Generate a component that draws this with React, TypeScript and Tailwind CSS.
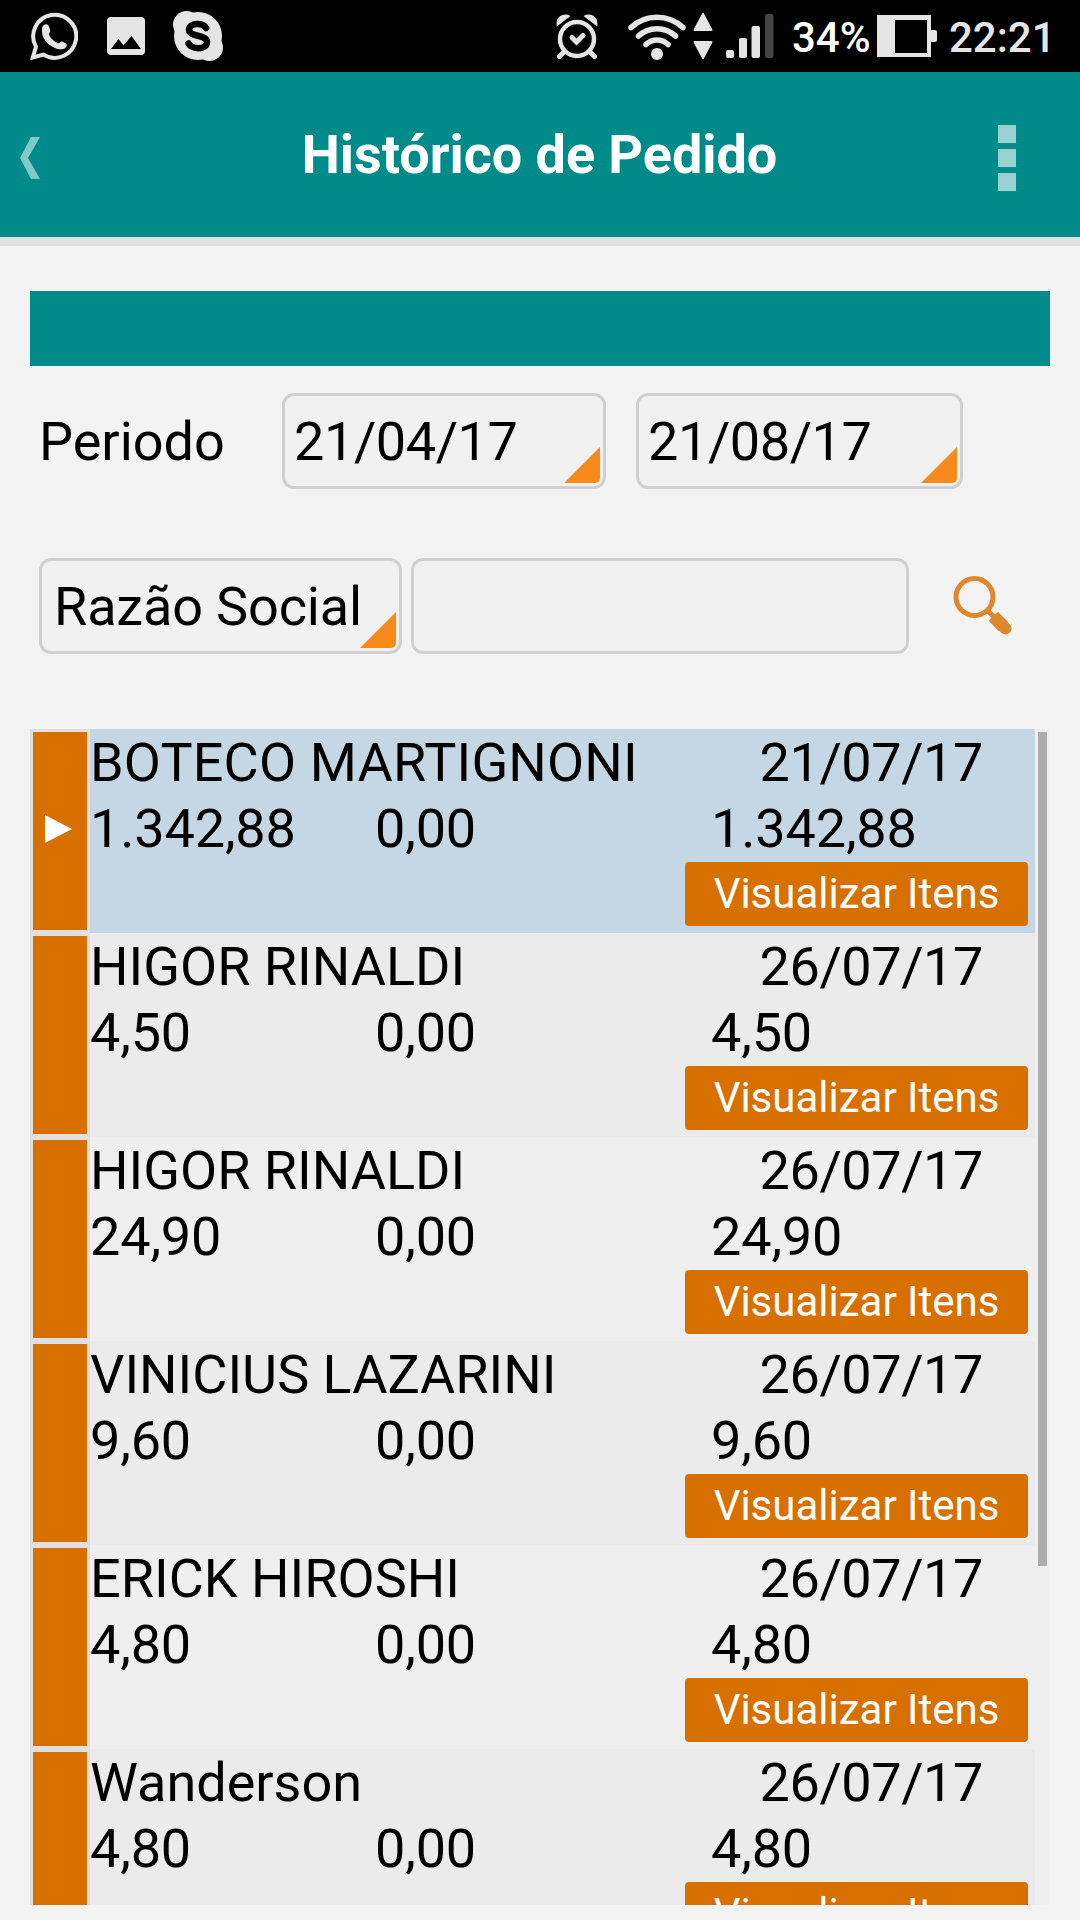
import React from 'react';

interface Order {
  client: string;
  date: string;
  total: string;
  discount: string;
  net: string;
}

const orders: Order[] = [
  { client: 'BOTECO MARTIGNONI', date: '21/07/17', total: '1.342,88', discount: '0,00', net: '1.342,88' },
  { client: 'HIGOR RINALDI', date: '26/07/17', total: '4,50', discount: '0,00', net: '4,50' },
  { client: 'HIGOR RINALDI', date: '26/07/17', total: '24,90', discount: '0,00', net: '24,90' },
  { client: 'VINICIUS LAZARINI', date: '26/07/17', total: '9,60', discount: '0,00', net: '9,60' },
  { client: 'ERICK HIROSHI', date: '26/07/17', total: '4,80', discount: '0,00', net: '4,80' },
  { client: 'Wanderson', date: '26/07/17', total: '4,80', discount: '0,00', net: '4,80' },
];

const StatusBar = () => (
  <div className="flex h-[72px] items-center bg-black pl-[30px] text-[#e5e5e5]">
    {/* WhatsApp */}
    <svg className="h-12 w-12" viewBox="0 0 48 48" fill="none">
      <path d="M2.8 45.500L6 34.800A21.500 21.500 0 1 1 13.500 42.600z" stroke="#e5e5e5" strokeWidth="4" />
      <path
        d="M13 14c2-2.500 5-2 6 .5l1.300 4c.4 1.500-1.800 3-1.300 4.300 1.600 3.600 5 7 9 8.500 1.300.4 2.600-2.300 4-1.800l3.700 1.800c1.800 1 1.300 3.300-.5 4.800-2.500 2-6 1.900-10.200 0C16.500 32 11.500 26 12 17.500c0-1.500.3-2.800 1-3.500z"
        fill="#e5e5e5"
      />
    </svg>
    <svg className="ml-[29px] h-[38px] w-[38px]" viewBox="0 0 38 38">
      <rect width="38" height="38" rx="4" fill="#e5e5e5" />
      <path d="M4 32l7.500-10 5 6.500L24.500 19 34 32z" fill="#000" />
    </svg>
    {/* Skype */}
    <svg className="ml-7 h-[50px] w-[50px]" viewBox="0 0 50 50" fill="#e5e5e5">
      <circle cx="25" cy="25" r="24" />
      <circle cx="13.500" cy="13.500" r="13.500" />
      <circle cx="36.500" cy="36.500" r="13.500" />
      <path
        d="M33 17C30.500 12 16.500 11 16 18.500c-.5 8 18 4.500 18 12.500 0 8.500-15.500 7.500-18.500 1.500"
        fill="none"
        stroke="#000"
        strokeWidth="6.500"
        strokeLinecap="round"
      />
    </svg>
    {/* Alarm */}
    <svg className="ml-[333px] h-[46px] w-[44px]" viewBox="0 0 44 46" fill="none" stroke="#e5e5e5">
      <circle cx="21" cy="26" r="17" strokeWidth="4.500" />
      <path d="M7.500 39.500l-4 4M34.500 39.500l4 4" strokeWidth="5" strokeLinecap="round" />
      <path d="M16 24.500l4.500 4.500 6.500-6.500" strokeWidth="5" strokeLinecap="round" />
      <path d="M.8 13.500C-1 4 7 -1 14.500 3zM41.200 13.500C43 4 35 -1 27.500 3z" fill="#e5e5e5" stroke="none" />
    </svg>
    {/* Wi-Fi */}
    <svg className="ml-7 h-12 w-[58px]" viewBox="0 0 58 48" fill="none" stroke="#e5e5e5" strokeWidth="5.500" strokeLinecap="round">
      <path d="M3 15.500a38 38 0 0 1 52 0M10.500 24a27 27 0 0 1 37 0M18 32.500a16 16 0 0 1 22 0" />
      <circle cx="29" cy="42" r="6" fill="#e5e5e5" stroke="none" />
    </svg>
    <svg className="ml-[7px] h-12 w-5" viewBox="0 0 20 48" fill="#e5e5e5" stroke="#e5e5e5" strokeWidth="2" strokeLinejoin="round">
      <path d="M10 2l8.500 16h-17zM10 46l8.500-16h-17z" />
    </svg>
    {/* Signal */}
    <svg className="ml-[13px] h-11 w-12" viewBox="0 0 48 44" fill="#e5e5e5">
      <rect y="36" width="8" height="8" rx="2" />
      <rect x="13" y="24" width="8" height="20" rx="2" />
      <rect x="25.500" y="12" width="8.500" height="32" rx="2" />
      <rect x="39" width="8.500" height="44" rx="2" fill="#444" />
    </svg>
    <span className="ml-[18px] w-[85px] pt-[3px] text-[42px] leading-[50px] font-medium text-white">34%</span>
    <svg className="h-[42px] w-[60px]" viewBox="0 0 60 42">
      <rect width="54" height="42" fill="#e5e5e5" />
      <rect x="18" y="5" width="32" height="33" fill="#000" />
      <rect x="53" y="15" width="7" height="12" rx="2" fill="#e5e5e5" />
    </svg>
    <span className="ml-3 pt-[3px] text-[42px] leading-[50px] font-medium">22:21</span>
  </div>
);

const Header = () => (
  <header className="flex h-[174px] items-center justify-between border-b-[9px] border-[#e0e0e0] bg-[#008b8b] pt-[7px] pr-16 pl-5">
    <svg className="h-[42px] w-5" viewBox="0 0 20 42" fill="#80c9c8">
      <path d="M11 0h9L8 21l12 21h-9L0 21z" />
    </svg>
    <h1 className="pb-[7px] pl-[41px] text-[54px] leading-[64px] font-bold tracking-[-0.05px] text-white">Histórico de Pedido</h1>
    <div className="flex flex-col gap-1.5">
      <span className="h-[18px] w-[18px] bg-[#99d3d1]" />
      <span className="h-[18px] w-[18px] bg-[#99d3d1]" />
      <span className="h-[18px] w-[18px] bg-[#99d3d1]" />
    </div>
  </header>
);

const Picker = ({ value, className }: { value: string; className: string }) => (
  <button className={`relative h-24 rounded-xl border-3 border-[#d0d0d0] bg-[#f1f1f1] text-left leading-[92px] whitespace-nowrap ${className}`}>
    {value}
    <svg className="absolute right-[3px] bottom-[3px] h-9 w-9" viewBox="0 0 36 36" fill="#f78a1a">
      <path d="M0 36L36 0v31a5 5 0 0 1-5 5z" />
    </svg>
  </button>
);

const OrderRow = ({ order, selected, odd }: { order: Order; selected: boolean; odd: boolean }) => (
  <div className="flex h-[204px] shrink-0">
    <div className="w-[60px] border-3 border-[#e0e0e0] bg-[#d87000]">
      {selected && (
        <svg className="mt-[83px] ml-3 h-7 w-[27px]" viewBox="0 0 27 28" fill="#fff">
          <path d="M0 0l27 14L0 28z" />
        </svg>
      )}
    </div>
    <div className={`w-[945px] pt-px leading-[66px] ${selected ? 'bg-[#c5d7e4]' : odd ? 'bg-[#ebebeb]' : 'bg-[#efefef]'}`}>
      <div className="flex h-[66px] justify-between pr-[52px]">
        <span className={selected ? 'tracking-[0.15px]' : ''}>{order.client}</span>
        <span className="tracking-[-0.4px]">{order.date}</span>
      </div>
      <div className="flex h-[66px] tracking-[-0.15px]">
        <span className="w-[285px]">{order.total}</span>
        <span className="w-[336px]">{order.discount}</span>
        <span>{order.net}</span>
      </div>
      <button className="ml-[595px] block h-16 w-[343px] rounded bg-[#d87000] text-[42px] leading-[64px] text-white">
        Visualizar Itens
      </button>
    </div>
  </div>
);

export default function App() {
  return (
    <div className="h-[1920px] w-[1080px] overflow-hidden bg-[#f3f3f3] font-['Roboto',sans-serif] text-[54px] text-black">
      <StatusBar />
      <Header />
      <main className="px-[30px] pt-[45px]">
        <div className="h-[75px] bg-[#008b8b]" />

        <div className="mt-[27px] flex pl-[9px]">
          <span className="w-[243px] leading-[97px]">Periodo</span>
          <Picker value="21/04/17" className="w-[324px] pl-[9px] tracking-[-0.4px]" />
          <Picker value="21/08/17" className="ml-[30px] w-[327px] pl-[9px] tracking-[-0.4px]" />
        </div>

        <div className="mt-[68px] flex pl-[9px]">
          <Picker value="Razão Social" className="w-[363px] pl-3 tracking-[-0.15px]" />
          <input className="ml-[9px] h-24 w-[498px] rounded-xl border-3 border-[#d0d0d0] bg-[#f1f1f1]" />
          <svg className="mt-[17px] ml-11 h-[60px] w-[60px]" viewBox="0 0 60 60" fill="none" stroke="#dd882d">
            <circle cx="21.500" cy="22" r="18.500" strokeWidth="5" />
            <path d="M34 35l7 7" strokeWidth="5" />
            <path d="M40.500 41.500l10 10" strokeWidth="13" />
            <path d="M43.500 44.500l9 9" strokeWidth="12" strokeLinecap="round" />
          </svg>
        </div>

        <div className="mt-[75px] flex h-[1176px] overflow-hidden bg-[#efefef]">
          <div className="flex w-[1005px] flex-col">
            {orders.map((order, i) => (
              <OrderRow key={i} order={order} selected={i === 0} odd={i % 2 === 1} />
            ))}
          </div>
          <div className="mt-[3px] ml-[3px] h-[834px] w-[9px] bg-[#adadad]" />
        </div>
      </main>
    </div>
  );
}
